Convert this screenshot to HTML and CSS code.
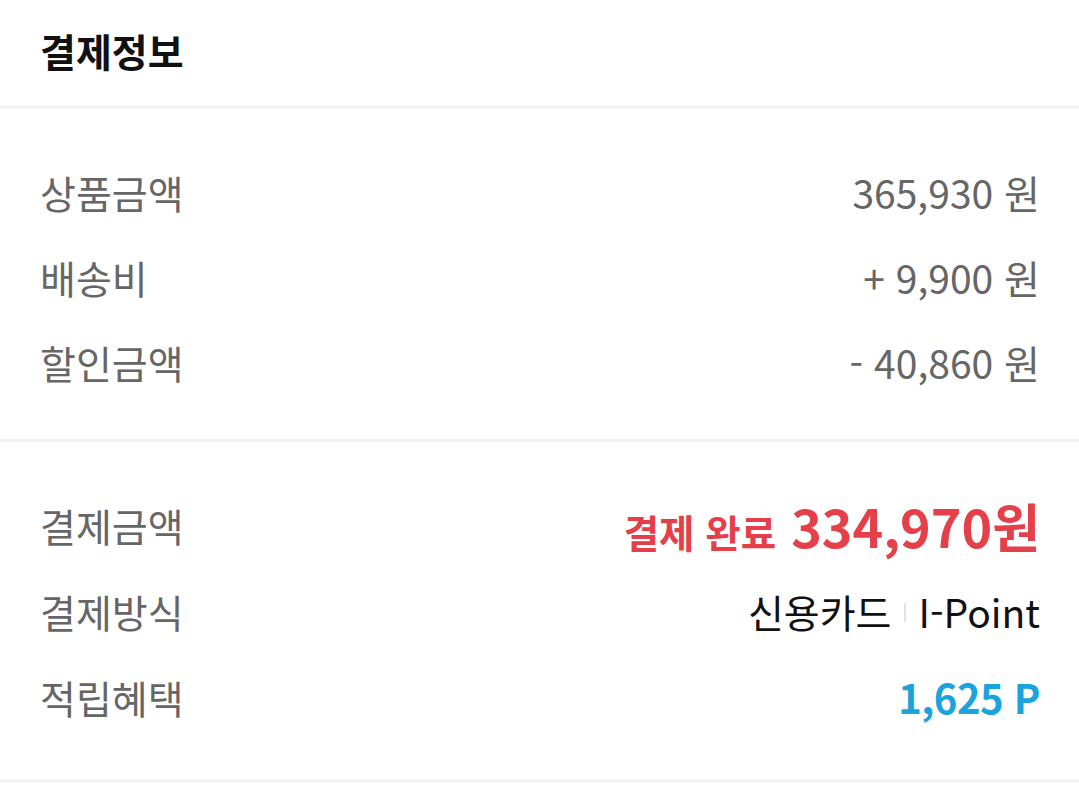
FILE: index.html
```html
<!DOCTYPE html>
<html lang="ko">
<head>
<meta charset="utf-8">
<link rel="stylesheet" href="styles.css">
</head>
<body>
<div class="page">
  <header class="head">
    <h1 class="title">결제정보</h1>
  </header>
  <section class="sec sec1">
    <div class="row"><span class="label">상품금액</span><span class="val">365,930 원</span></div>
    <div class="row"><span class="label">배송비</span><span class="val">+ 9,900 원</span></div>
    <div class="row"><span class="label">할인금액</span><span class="val">- 40,860 원</span></div>
  </section>
  <section class="sec sec2">
    <div class="row"><span class="label">결제금액</span><span class="total"><span class="status">결제 완료</span><span class="amount">334,970원</span></span></div>
    <div class="row"><span class="label">결제방식</span><span class="method">신용카드<span class="bar"></span>I-Point</span></div>
    <div class="row"><span class="label">적립혜택</span><span class="point">1,625 P</span></div>
  </section>
</div>
</body>
</html>
```
FILE: styles.css
```css
* { box-sizing: border-box; }
html, body { margin: 0; padding: 0; background: #fff; }
body {
  font-family: "Noto Sans CJK KR", "Noto Sans", sans-serif;
  width: 1079px;
  height: 786px;
  overflow: hidden;
}
.head {
  height: 109px;
  display: flex;
  align-items: center;
  padding: 0 40px 6px;
  border-bottom: 3px solid #f2f2f2;
}
.title {
  margin: 0;
  font-size: 39px;
  font-weight: 700;
  color: #111;
}
.sec {
  display: flex;
  flex-direction: column;
  padding: 0 39px 0 40px;
  border-bottom: 3px solid #f2f2f2;
}
.sec1 { gap: 35px; padding-top: 58px; padding-bottom: 52px; }
.sec2 { gap: 36px; padding-top: 58px; padding-bottom: 57px; }
.row {
  height: 50px;
  display: flex;
  justify-content: space-between;
  align-items: center;
}
.label {
  font-size: 39px;
  color: #666;
}
.val {
  font-size: 39px;
  color: #666;
}
.total {
  display: flex;
  align-items: baseline;
  color: #e5404a;
  font-weight: 700;
}
.status { font-size: 38.5px; margin-right: 15px; }
.amount { font-size: 52px; }
.method {
  display: flex;
  align-items: center;
  font-size: 39px;
  color: #111;
}
.bar {
  display: inline-block;
  width: 2px;
  height: 19px;
  background: #e2e2e2;
  margin: 2px 13px 0 12px;
}
.point {
  font-size: 40px;
  font-weight: 700;
  color: #1aa3dc;
  letter-spacing: -0.5px;
}
```
